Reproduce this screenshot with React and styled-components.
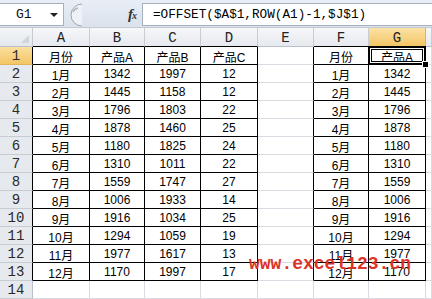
import React from 'react';
import styled, { createGlobalStyle, css } from 'styled-components';

const Global = createGlobalStyle`
  html, body { margin: 0; padding: 0; background: #fff; overflow: hidden; }
  body { width: 432px; height: 299px; }
`;

const GRID = '#d8dce2';

const Frame = styled.div`
  position: relative;
  width: 432px;
  height: 299px;
  overflow: hidden;
  display: flex;
  flex-direction: column;
  font-family: "Liberation Sans", "Noto Sans CJK SC", sans-serif;
`;

const FormulaBar = styled.div`
  height: 28px;
  box-sizing: border-box;
  display: flex;
  align-items: stretch;
  padding: 3px 0 1px 0;
  background: linear-gradient(#e9eef5, #dbe2ec);
  border-bottom: 1px solid #c3cad4;
`;

const NameBox = styled.div`
  width: 64px;
  box-sizing: border-box;
  background: #fff;
  border: 1px solid #a7b0bd;
  border-left: none;
  display: flex;
  align-items: center;
  justify-content: space-between;
  padding: 0 5px 0 16px;
  font-family: "Liberation Mono", monospace;
  font-size: 13px;
  color: #111;
`;

const Arrow = styled.span`
  width: 0;
  height: 0;
  border-left: 4px solid transparent;
  border-right: 4px solid transparent;
  border-top: 4px solid #222;
`;

const Middle = styled.div`
  width: 78px;
  display: flex;
  align-items: center;
  justify-content: space-between;
  padding: 0 6px 0 2px;
  box-sizing: border-box;
`;

const Fx = styled.span`
  font-family: "Liberation Serif", serif;
  font-style: italic;
  font-weight: bold;
  font-size: 15px;
  color: #333;
  letter-spacing: -1px;
  small { font-size: 10px; }
`;

const FormulaInput = styled.div`
  flex: 1;
  background: #fff;
  border: 1px solid #a7b0bd;
  border-right: none;
  display: flex;
  align-items: center;
  padding-left: 10px;
  font-family: "Liberation Mono", monospace;
  font-size: 12.7px;
  color: #000;
  white-space: nowrap;
`;

const Sheet = styled.div`
  display: grid;
  grid-template-columns: 33px 57px 55px 56px 57px 56px 55px 57px 1fr;
  grid-template-rows: 19px repeat(14, 18px);
`;

const Corner = styled.div`
  position: relative;
  box-sizing: border-box;
  background: linear-gradient(#f4f6f8, #e4e8ed);
  border-right: 1px solid #c5cad2;
  border-bottom: 1px solid #b9c0ca;
  &::after {
    content: '';
    position: absolute;
    right: 3px;
    bottom: 3px;
    width: 0;
    height: 0;
    border-left: 8px solid transparent;
    border-bottom: 8px solid #d2d6dc;
  }
`;

const ColHead = styled.div`
  box-sizing: border-box;
  display: flex;
  align-items: center;
  justify-content: center;
  padding-top: 1px;
  font-family: "Liberation Mono", monospace;
  font-size: 14px;
  color: #222;
  background: linear-gradient(#f6f7f9, #e6e9ee);
  border-right: 1px solid #c8ccd3;
  border-bottom: 1px solid ${p => (p.$table ? '#000' : '#b9c0ca')};
  ${p => p.$active && css`
    background: linear-gradient(#fbe2a4, #f3c565);
    border-right-color: #e0b45a;
  `}
`;

const RowHead = styled.div`
  box-sizing: border-box;
  display: flex;
  align-items: center;
  justify-content: center;
  padding-top: 1px;
  font-family: "Liberation Mono", monospace;
  font-size: 14px;
  color: #2a2a2a;
  background: #e6e9ee;
  border-bottom: 1px solid #c8ccd3;
  border-right: 1px solid ${p => (p.$table ? '#000' : '#b9c0ca')};
  ${p => p.$active && css`
    background: linear-gradient(#fbe0a0, #f3c565);
    border-bottom-color: #e0b45a;
  `}
`;

const Cell = styled.div`
  position: relative;
  box-sizing: border-box;
  display: flex;
  align-items: center;
  justify-content: center;
  padding-top: 1px;
  font-family: "Liberation Sans Narrow", "Liberation Sans", "Noto Sans CJK SC", sans-serif;
  font-size: 12px;
  color: #000;
  white-space: nowrap;
  border-right: 1px solid ${p => (p.$rightDark ? '#000' : GRID)};
  border-bottom: 1px solid ${p => (p.$bottomDark ? '#000' : GRID)};
  ${p => p.$selected && css`
    &::after {
      content: '';
      position: absolute;
      left: -1px;
      top: -1px;
      right: -1px;
      bottom: -1px;
      border: 2px solid #000;
      box-shadow: inset 0 0 0 1px #fff, inset 0 0 0 2px #000;
      z-index: 2;
    }
    &::before {
      content: '';
      position: absolute;
      right: -4px;
      bottom: -4px;
      width: 5px;
      height: 5px;
      background: #000;
      border: 1px solid #fff;
      z-index: 3;
    }
  `}
`;

const Watermark = styled.div`
  position: absolute;
  left: 249px;
  top: 254px;
  font-family: "Liberation Mono", monospace;
  font-weight: bold;
  font-size: 18px;
  line-height: 20px;
  color: #dc3328;
  white-space: nowrap;
  z-index: 5;
`;

const Grip = () => (
  <svg width="16" height="24" viewBox="0 0 16 24">
    <path d="M16 1 A 11 11 0 0 0 16 23" fill="#eef1f5" stroke="#9ba5b2" strokeWidth="1" />
    <path d="M12 5 A 7 7 0 0 0 7 9" fill="none" stroke="#aeb6c1" strokeWidth="1.5" />
  </svg>
);

const months = ['1月', '2月', '3月', '4月', '5月', '6月', '7月', '8月', '9月', '10月', '11月', '12月'];
const A = [1342, 1445, 1796, 1878, 1180, 1310, 1559, 1006, 1916, 1294, 1977, 1170];
const B = [1997, 1158, 1803, 1460, 1825, 1011, 1747, 1933, 1034, 1059, 1617, 1997];
const C = [12, 12, 22, 25, 24, 22, 27, 14, 25, 19, 13, 17];

const cols = ['A', 'B', 'C', 'D', 'E', 'F', 'G', ''];
const tableCols = [0, 1, 2, 3, 5, 6];

function rowValues(r) {
  if (r === 1) return ['月份', '产品A', '产品B', '产品C', '', '月份', '产品A', ''];
  if (r <= 13) {
    const i = r - 2;
    return [months[i], A[i], B[i], C[i], '', months[i], A[i], ''];
  }
  return ['', '', '', '', '', '', '', ''];
}

export default function App() {
  const rows = Array.from({ length: 14 }, (_, i) => i + 1);
  const inTable = (r, c) => r >= 1 && r <= 13 && tableCols.includes(c);
  return (
    <Frame>
      <Global />
      <FormulaBar>
        <NameBox>
          <span>G1</span>
          <Arrow />
        </NameBox>
        <Middle>
          <Grip />
          <Fx>f<small>x</small></Fx>
        </Middle>
        <FormulaInput>=OFFSET($A$1,ROW(A1)-1,$J$1)</FormulaInput>
      </FormulaBar>
      <Sheet>
        <Corner />
        {cols.map((c, i) => (
          <ColHead key={'h' + i} $table={tableCols.includes(i)} $active={c === 'G'}>
            {c}
          </ColHead>
        ))}
        {rows.map(r => (
          <React.Fragment key={r}>
            <RowHead $table={r <= 13} $active={r === 1}>{r}</RowHead>
            {rowValues(r).map((v, c) => (
              <Cell
                key={c}
                $rightDark={inTable(r, c) || inTable(r, c + 1)}
                $bottomDark={inTable(r, c)}
                $selected={r === 1 && c === 6}
              >
                {v}
              </Cell>
            ))}
          </React.Fragment>
        ))}
      </Sheet>
      <Watermark>www.excel123.cn</Watermark>
    </Frame>
  );
}
